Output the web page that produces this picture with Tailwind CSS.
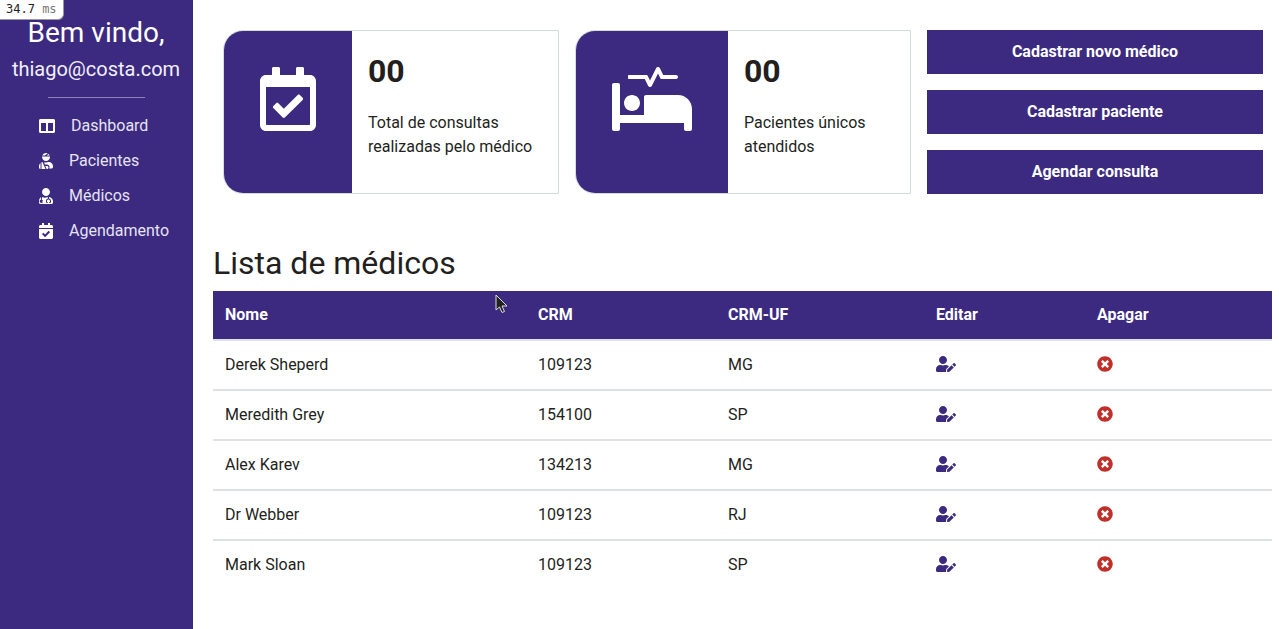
<!DOCTYPE html>
<html lang="pt-BR">
<head>
    <meta charset="UTF-8">
    <meta name="viewport" content="width=device-width, initial-scale=1.0">
    <title>Médicos</title>
    <script src="https://cdn.jsdelivr.net/npm/@tailwindcss/browser@4"></script>
</head>
<body class="bg-white text-[#231f20] font-['Roboto',sans-serif] overflow-hidden">
    <!-- Medidor de tempo -->
    <div class="absolute left-0 top-0 z-10 h-[20px] w-[64px] rounded-br-[6px] bg-white border-r border-b border-[#999] pl-[6px] font-['DejaVu_Sans_Mono',monospace] text-[12px] leading-[19px] text-[#222] whitespace-nowrap">34.7 <span class="text-[#777]">ms</span></div>

    <!-- Cursor -->
    <svg class="absolute left-[495px] top-[294px] z-10" width="13" height="20" viewBox="0 0 13 20"><path d="M1 1v15l3.500-3 2.500 5.500 2.500-1-2.500-5.500h5z" fill="#222" stroke="#ddd" stroke-width="1"/></svg>

    <div class="flex h-[629px] w-[1279px]">
        <!-- Sidebar -->
        <aside class="w-[193px] shrink-0 bg-[#3b2a7f] text-white">
            <p class="pt-[14px] pr-[1px] text-center text-[28px] leading-[38px]">Bem vindo,</p>
            <p class="mt-[2px] pr-[1px] text-center text-[20px] leading-[30px] text-[#f1effa]">thiago@costa.com</p>
            <hr class="mx-[48px] mt-[13px] border-t border-[#8d82b8]">
            <nav class="mt-[10px] text-[16px] text-[#e6e3f5]">
                <a href="#" class="flex h-[35px] items-center pl-[39px]">
                    <svg class="w-[16px] h-[14px] mr-[16px]" viewBox="0 32 512 448" fill="#fff"><path d="M464 32H48C21.490 32 0 53.490 0 80v352c0 26.510 21.490 48 48 48h416c26.510 0 48-21.490 48-48V80c0-26.510-21.490-48-48-48zM224 416H64V160h160v256zm224 0H288V160h160v256z"/></svg>
                    Dashboard
                </a>
                <a href="#" class="flex h-[35px] items-center pl-[39px]">
                    <svg class="w-[14px] h-[16px] mr-[16px]" viewBox="0 0 448 512" fill="#fff"><path d="M277.370 11.980C261.080 4.470 243.110 0 224 0c-53.690 0-99.500 33.130-118.510 80h81.190l90.690-68.020zM342.510 80c-7.900-19.470-20.670-36.200-36.490-49.520L239.990 80h102.520zM224 256c70.690 0 128-57.310 128-128 0-5.480-.95-10.700-1.610-16H97.610c-.67 5.300-1.610 10.520-1.610 16 0 70.690 57.310 128 128 128zM80 299.700V512h128.260l-98.450-221.520A132.835 132.835 0 0 0 80 299.700zM0 464c0 26.510 21.490 48 48 48V320.240C18.880 344.890 0 381.260 0 422.400V464zm256-48h-55.380l42.670 96H256c26.470 0 48-21.530 48-48s-21.530-48-48-48zm57.600-128h-16.710c-22.240 10.180-46.880 16-72.890 16-20.560 0-40.220-3.730-58.590-10.220L184.360 368H256c44.110 0 80 35.890 80 80 0 18.080-6.260 34.590-16.410 48H400c26.510 0 48-21.490 48-48v-25.600c0-74.230-60.170-134.400-134.400-134.400z"/></svg>
                    Pacientes
                </a>
                <a href="#" class="flex h-[35px] items-center pl-[39px]">
                    <svg class="w-[14px] h-[16px] mr-[16px]" viewBox="0 0 448 512" fill="#fff"><path d="M224 256c70.700 0 128-57.300 128-128S294.700 0 224 0 96 57.300 96 128s57.300 128 128 128zM104 424c0 13.300 10.700 24 24 24s24-10.700 24-24-10.700-24-24-24-24 10.700-24 24zm216-135.400v49c36.500 7.400 64 39.800 64 78.400v41.700c0 7.600-5.400 14.200-12.900 15.700l-32.200 6.400c-4.300.9-8.500-1.900-9.400-6.300l-3.100-15.700c-.9-4.300 1.900-8.500 6.300-9.400l19.300-3.900V416c0-62.800-96-65.100-96 1.900v26.700l19.300 3.900c4.300.9 7.100 5.100 6.300 9.400l-3.100 15.700c-.9 4.300-5.100 7.100-9.400 6.300l-31.200-4.200c-7.900-1.100-13.800-7.800-13.800-15.900V416c0-38.600 27.500-70.800 64-78.400v-45.200c-2.700-.2-5.400-.4-8-.4h-16.700c-22.200 10.200-46.900 16-72.900 16s-50.700-5.800-72.900-16h-16.700c-2.700 0-5.400.2-8 .4v81.700c23.100 6.900 40 28.100 40 53.400 0 30.900-25.100 56-56 56s-56-25.100-56-56c0-25.300 16.900-46.500 40-53.400v-78.200C32.400 308.700 0 358.500 0 422.400V464c0 26.500 21.500 48 48 48h352c26.500 0 48-21.500 48-48v-41.600c0-67.200-51-122-128-133.800z"/></svg>
                    Médicos
                </a>
                <a href="#" class="flex h-[35px] items-center pl-[39px]">
                    <svg class="w-[14px] h-[16px] mr-[16px]" viewBox="0 0 448 512" fill="#fff"><path d="M436 160H12c-6.600 0-12-5.400-12-12v-36c0-26.500 21.500-48 48-48h48V12c0-6.600 5.400-12 12-12h40c6.600 0 12 5.400 12 12v52h128V12c0-6.600 5.400-12 12-12h40c6.600 0 12 5.400 12 12v52h48c26.500 0 48 21.500 48 48v36c0 6.600-5.400 12-12 12zM12 192h424c6.600 0 12 5.400 12 12v260c0 26.500-21.500 48-48 48H48c-26.500 0-48-21.500-48-48V204c0-6.600 5.400-12 12-12zm333.300 95.900l-28.200-28.400c-4.700-4.700-12.300-4.700-17-.1L194.600 364.200l-45.900-46.300c-4.700-4.700-12.300-4.700-17-.1l-28.400 28.200c-4.700 4.700-4.700 12.300-.1 17l82.600 83.300c4.700 4.700 12.300 4.700 17 .1l142-140.800c4.700-4.700 4.700-12.300.1-17z"/></svg>
                    Agendamento
                </a>
            </nav>
        </aside>

        <!-- Conteúdo -->
        <main class="flex-1 pl-[20px] pr-[7px]">
            <div class="flex gap-[16px] pl-[10px] pr-[2px] pt-[30px]">
                <div class="flex h-[164px] w-[336px] rounded-l-[20px] border border-[#d5dbdb]">
                    <div class="flex w-[128px] justify-center pt-[36px] rounded-l-[19px] bg-[#3b2a7f]">
                        <svg class="w-[56px] h-[64px]" viewBox="0 0 448 512" fill="#fff"><path d="M400 64h-48V12c0-6.600-5.400-12-12-12h-40c-6.600 0-12 5.400-12 12v52H160V12c0-6.600-5.400-12-12-12h-40c-6.600 0-12 5.400-12 12v52H48C21.500 64 0 85.500 0 112v352c0 26.500 21.500 48 48 48h352c26.500 0 48-21.500 48-48V112c0-26.500-21.500-48-48-48zm-6 400H54c-3.300 0-6-2.700-6-6V160h352v298c0 3.300-2.700 6-6 6zm-52.800-200.600L198.800 404.500c-4.700 4.700-12.300 4.600-17-.1l-75.100-75.700c-4.700-4.700-4.600-12.300.1-17l22.700-22.500c4.700-4.700 12.300-4.600 17 .1l44.100 44.500 111.100-110.200c4.700-4.700 12.300-4.600 17 .1l22.500 22.700c4.700 4.700 4.600 12.300-.1 17z"/></svg>
                    </div>
                    <div class="pl-[16px] pt-[20px]">
                        <p class="text-[32px] font-bold leading-[40px]">00</p>
                        <p class="mt-[20px] text-[16px] leading-[24px]">Total de consultas<br>realizadas pelo médico</p>
                    </div>
                </div>
                <div class="flex h-[164px] w-[336px] rounded-l-[20px] border border-[#d5dbdb]">
                    <div class="flex w-[152px] justify-center pt-[36px] rounded-l-[19px] bg-[#3b2a7f]">
                        <svg class="w-[80px] h-[64px]" viewBox="0 0 640 512" fill="#fff"><path d="M528 224H272c-8.800 0-16 7.200-16 16v144H64V144c0-8.800-7.200-16-16-16H16c-8.800 0-16 7.200-16 16v352c0 8.800 7.200 16 16 16h32c8.800 0 16-7.200 16-16v-48h512v48c0 8.800 7.200 16 16 16h32c8.800 0 16-7.200 16-16V336c0-61.900-50.100-112-112-112zM136 96h126.100l27.600 55.200c5.900 11.800 22.700 11.800 28.600 0L368 51.800 390.100 96H512c8.800 0 16-7.200 16-16s-7.200-16-16-16H409.900L382.300 8.800C376.400-3 359.600-3 353.700 8.800L304 108.200l-19.900-39.800c-1.400-2.700-4.100-4.400-7.200-4.400H136c-4.400 0-8 3.600-8 8v16c0 4.400 3.600 8 8 8zm24 256c35.300 0 64-28.700 64-64s-28.700-64-64-64-64 28.700-64 64 28.700 64 64 64z"/></svg>
                    </div>
                    <div class="pl-[16px] pt-[20px]">
                        <p class="text-[32px] font-bold leading-[40px]">00</p>
                        <p class="mt-[20px] text-[16px] leading-[24px]">Pacientes únicos<br>atendidos</p>
                    </div>
                </div>
                <div class="flex w-[336px] flex-col gap-[16px]">
                    <button class="h-[44px] bg-[#3b2a7f] text-[16px] font-bold text-white">Cadastrar novo médico</button>
                    <button class="h-[44px] bg-[#3b2a7f] text-[16px] font-bold text-white">Cadastrar paciente</button>
                    <button class="h-[44px] bg-[#3b2a7f] text-[16px] font-bold text-white">Agendar consulta</button>
                </div>
            </div>

            <h1 class="mt-[49px] text-[32px] leading-[40px]">Lista de médicos</h1>

            <table class="mt-[8px] w-[1059px] table-fixed border-collapse text-left text-[16px]">
                <thead class="bg-[#3b2a7f] text-white">
                    <tr class="h-[49px] border-b-2 border-[#dee2e6]">
                        <th class="w-[313px] pl-[12px] font-bold">Nome</th>
                        <th class="w-[190px] pl-[12px] font-bold">CRM</th>
                        <th class="w-[208px] pl-[12px] font-bold">CRM-UF</th>
                        <th class="w-[161px] pl-[12px] font-bold">Editar</th>
                        <th class="pl-[12px] font-bold">Apagar</th>
                    </tr>
                </thead>
                <tbody>
                    <tr class="h-[50px] border-b-2 border-[#dee2e6]">
                        <td class="pl-[12px]">Derek Sheperd</td>
                        <td class="pl-[12px]">109123</td>
                        <td class="pl-[12px]">MG</td>
                        <td class="pl-[12px]"><svg class="w-[20px] h-[16px] -translate-y-[1px]" viewBox="0 0 640 512" fill="#3b2a7f"><path d="M224 256c70.700 0 128-57.300 128-128S294.700 0 224 0 96 57.300 96 128s57.300 128 128 128zm89.600 32h-16.700c-22.200 10.200-46.900 16-72.900 16s-50.600-5.800-72.900-16h-16.700C60.200 288 0 348.200 0 422.400V464c0 26.500 21.500 48 48 48h274.900c-2.400-6.800-3.400-14-2.600-21.300l6.800-60.900 1.200-11.100 7.900-7.900 77.300-77.300c-24.500-27.700-60-45.500-99.900-45.500zm45.300 145.300l-6.800 61c-1.100 10.200 7.500 18.800 17.600 17.600l60.900-6.800 137.900-137.900-71.700-71.700-137.900 137.800zM633 268.900L595.100 231c-9.300-9.300-24.500-9.300-33.800 0l-37.800 37.800-4.100 4.100 71.800 71.700 41.800-41.800c9.300-9.400 9.300-24.500 0-33.900z"/></svg></td>
                        <td class="pl-[12px]"><svg class="w-[16px] h-[16px] -translate-y-[1px]" viewBox="0 0 512 512" fill="#c0302a"><path d="M256 8C119 8 8 119 8 256s111 248 248 248 248-111 248-248S393 8 256 8zm121.600 313.100c4.700 4.700 4.700 12.300 0 17L338 377.600c-4.700 4.700-12.300 4.700-17 0L256 312l-65.100 65.600c-4.700 4.700-12.300 4.700-17 0L134.400 338c-4.700-4.700-4.700-12.300 0-17l65.600-65-65.600-65.100c-4.700-4.700-4.700-12.300 0-17l39.600-39.600c4.700-4.700 12.300-4.700 17 0l65 65.700 65.100-65.600c4.700-4.700 12.300-4.700 17 0l39.600 39.600c4.700 4.700 4.700 12.300 0 17L312 256l65.600 65.100z"/></svg></td>
                    </tr>
                    <tr class="h-[50px] border-b-2 border-[#dee2e6]">
                        <td class="pl-[12px]">Meredith Grey</td>
                        <td class="pl-[12px]">154100</td>
                        <td class="pl-[12px]">SP</td>
                        <td class="pl-[12px]"><svg class="w-[20px] h-[16px] -translate-y-[1px]" viewBox="0 0 640 512" fill="#3b2a7f"><path d="M224 256c70.700 0 128-57.300 128-128S294.700 0 224 0 96 57.300 96 128s57.300 128 128 128zm89.600 32h-16.700c-22.200 10.200-46.900 16-72.900 16s-50.600-5.800-72.900-16h-16.700C60.200 288 0 348.200 0 422.400V464c0 26.500 21.500 48 48 48h274.900c-2.400-6.800-3.400-14-2.600-21.300l6.800-60.900 1.200-11.100 7.900-7.900 77.300-77.300c-24.500-27.700-60-45.500-99.900-45.500zm45.300 145.300l-6.800 61c-1.100 10.200 7.500 18.800 17.600 17.600l60.900-6.800 137.900-137.900-71.700-71.700-137.900 137.800zM633 268.900L595.100 231c-9.300-9.300-24.500-9.300-33.800 0l-37.800 37.800-4.100 4.100 71.800 71.700 41.800-41.800c9.300-9.400 9.300-24.500 0-33.900z"/></svg></td>
                        <td class="pl-[12px]"><svg class="w-[16px] h-[16px] -translate-y-[1px]" viewBox="0 0 512 512" fill="#c0302a"><path d="M256 8C119 8 8 119 8 256s111 248 248 248 248-111 248-248S393 8 256 8zm121.600 313.100c4.700 4.700 4.700 12.300 0 17L338 377.600c-4.700 4.700-12.300 4.700-17 0L256 312l-65.100 65.600c-4.700 4.700-12.300 4.700-17 0L134.400 338c-4.700-4.700-4.700-12.300 0-17l65.600-65-65.600-65.100c-4.700-4.700-4.700-12.300 0-17l39.600-39.600c4.700-4.700 12.300-4.700 17 0l65 65.700 65.100-65.600c4.700-4.700 12.300-4.700 17 0l39.600 39.600c4.700 4.700 4.700 12.300 0 17L312 256l65.600 65.100z"/></svg></td>
                    </tr>
                    <tr class="h-[50px] border-b-2 border-[#dee2e6]">
                        <td class="pl-[12px]">Alex Karev</td>
                        <td class="pl-[12px]">134213</td>
                        <td class="pl-[12px]">MG</td>
                        <td class="pl-[12px]"><svg class="w-[20px] h-[16px] -translate-y-[1px]" viewBox="0 0 640 512" fill="#3b2a7f"><path d="M224 256c70.700 0 128-57.300 128-128S294.700 0 224 0 96 57.300 96 128s57.300 128 128 128zm89.600 32h-16.700c-22.200 10.200-46.900 16-72.900 16s-50.600-5.800-72.900-16h-16.700C60.200 288 0 348.200 0 422.400V464c0 26.500 21.500 48 48 48h274.900c-2.400-6.800-3.400-14-2.600-21.300l6.800-60.900 1.200-11.100 7.900-7.900 77.300-77.300c-24.500-27.700-60-45.500-99.900-45.500zm45.300 145.300l-6.800 61c-1.100 10.200 7.500 18.800 17.600 17.600l60.900-6.800 137.900-137.900-71.700-71.700-137.900 137.800zM633 268.900L595.100 231c-9.300-9.300-24.500-9.300-33.800 0l-37.800 37.800-4.100 4.100 71.800 71.700 41.800-41.800c9.300-9.400 9.300-24.500 0-33.900z"/></svg></td>
                        <td class="pl-[12px]"><svg class="w-[16px] h-[16px] -translate-y-[1px]" viewBox="0 0 512 512" fill="#c0302a"><path d="M256 8C119 8 8 119 8 256s111 248 248 248 248-111 248-248S393 8 256 8zm121.600 313.100c4.700 4.700 4.700 12.300 0 17L338 377.600c-4.700 4.700-12.300 4.700-17 0L256 312l-65.100 65.600c-4.700 4.700-12.300 4.700-17 0L134.400 338c-4.700-4.700-4.700-12.300 0-17l65.600-65-65.600-65.100c-4.700-4.700-4.700-12.300 0-17l39.600-39.600c4.700-4.700 12.300-4.700 17 0l65 65.700 65.100-65.600c4.700-4.700 12.300-4.700 17 0l39.600 39.600c4.700 4.700 4.700 12.300 0 17L312 256l65.600 65.100z"/></svg></td>
                    </tr>
                    <tr class="h-[50px] border-b-2 border-[#dee2e6]">
                        <td class="pl-[12px]">Dr Webber</td>
                        <td class="pl-[12px]">109123</td>
                        <td class="pl-[12px]">RJ</td>
                        <td class="pl-[12px]"><svg class="w-[20px] h-[16px] -translate-y-[1px]" viewBox="0 0 640 512" fill="#3b2a7f"><path d="M224 256c70.700 0 128-57.300 128-128S294.700 0 224 0 96 57.300 96 128s57.300 128 128 128zm89.600 32h-16.700c-22.200 10.200-46.900 16-72.900 16s-50.600-5.800-72.900-16h-16.700C60.200 288 0 348.200 0 422.400V464c0 26.500 21.500 48 48 48h274.900c-2.400-6.800-3.400-14-2.600-21.300l6.800-60.900 1.200-11.100 7.900-7.900 77.300-77.300c-24.500-27.700-60-45.500-99.900-45.500zm45.300 145.300l-6.800 61c-1.100 10.200 7.500 18.800 17.600 17.600l60.900-6.800 137.900-137.900-71.700-71.700-137.900 137.800zM633 268.900L595.100 231c-9.300-9.300-24.500-9.300-33.800 0l-37.800 37.800-4.100 4.100 71.800 71.700 41.800-41.800c9.300-9.400 9.300-24.500 0-33.900z"/></svg></td>
                        <td class="pl-[12px]"><svg class="w-[16px] h-[16px] -translate-y-[1px]" viewBox="0 0 512 512" fill="#c0302a"><path d="M256 8C119 8 8 119 8 256s111 248 248 248 248-111 248-248S393 8 256 8zm121.600 313.100c4.700 4.700 4.700 12.300 0 17L338 377.600c-4.700 4.700-12.300 4.700-17 0L256 312l-65.100 65.600c-4.700 4.700-12.300 4.700-17 0L134.400 338c-4.700-4.700-4.700-12.300 0-17l65.600-65-65.600-65.100c-4.700-4.700-4.700-12.300 0-17l39.600-39.600c4.700-4.700 12.300-4.700 17 0l65 65.700 65.100-65.600c4.700-4.700 12.300-4.700 17 0l39.600 39.600c4.700 4.700 4.700 12.300 0 17L312 256l65.600 65.100z"/></svg></td>
                    </tr>
                    <tr class="h-[50px] border-b-2 border-white">
                        <td class="pl-[12px]">Mark Sloan</td>
                        <td class="pl-[12px]">109123</td>
                        <td class="pl-[12px]">SP</td>
                        <td class="pl-[12px]"><svg class="w-[20px] h-[16px] -translate-y-[1px]" viewBox="0 0 640 512" fill="#3b2a7f"><path d="M224 256c70.700 0 128-57.300 128-128S294.700 0 224 0 96 57.300 96 128s57.300 128 128 128zm89.600 32h-16.700c-22.200 10.200-46.900 16-72.900 16s-50.600-5.800-72.900-16h-16.700C60.200 288 0 348.200 0 422.400V464c0 26.500 21.500 48 48 48h274.900c-2.400-6.800-3.400-14-2.600-21.300l6.800-60.900 1.200-11.100 7.900-7.900 77.300-77.300c-24.500-27.700-60-45.500-99.900-45.500zm45.300 145.300l-6.800 61c-1.100 10.200 7.500 18.800 17.600 17.600l60.900-6.800 137.900-137.900-71.700-71.700-137.900 137.800zM633 268.900L595.100 231c-9.300-9.300-24.500-9.300-33.800 0l-37.800 37.800-4.100 4.100 71.800 71.700 41.800-41.800c9.300-9.400 9.300-24.500 0-33.900z"/></svg></td>
                        <td class="pl-[12px]"><svg class="w-[16px] h-[16px] -translate-y-[1px]" viewBox="0 0 512 512" fill="#c0302a"><path d="M256 8C119 8 8 119 8 256s111 248 248 248 248-111 248-248S393 8 256 8zm121.600 313.100c4.700 4.700 4.700 12.300 0 17L338 377.600c-4.700 4.700-12.300 4.700-17 0L256 312l-65.100 65.600c-4.700 4.700-12.300 4.700-17 0L134.400 338c-4.700-4.700-4.700-12.300 0-17l65.600-65-65.600-65.100c-4.700-4.700-4.700-12.300 0-17l39.600-39.600c4.700-4.700 12.300-4.700 17 0l65 65.700 65.100-65.600c4.700-4.700 12.300-4.700 17 0l39.600 39.600c4.700 4.700 4.700 12.300 0 17L312 256l65.600 65.100z"/></svg></td>
                    </tr>
                </tbody>
            </table>
        </main>
    </div>
</body>
</html>
